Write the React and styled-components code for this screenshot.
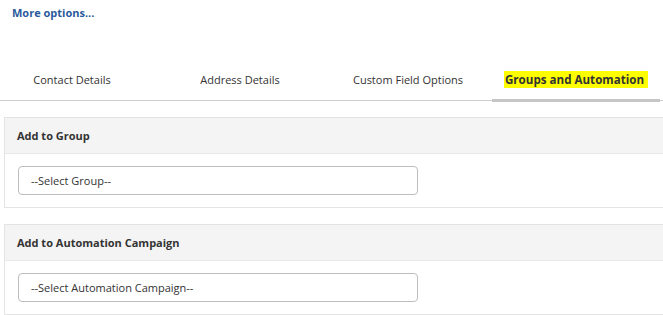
import styled, { createGlobalStyle } from 'styled-components';

const GlobalStyle = createGlobalStyle`
  body {
    margin: 0;
    background: #fff;
    font-family: 'Open Sans', 'DejaVu Sans', sans-serif;
    font-size: 11px;
    color: #333;
    overflow: hidden;
  }
`;

const Page = styled.div`
  width: 663px;
  height: 315px;
  overflow: hidden;
`;

const MoreLink = styled.a`
  display: block;
  height: 60px;
  box-sizing: border-box;
  padding: 5px 0 0 12px;
  line-height: 16px;
  font-weight: 700;
  color: #2b5a9c;
  text-decoration: none;
`;

const TabList = styled.div`
  display: flex;
  margin-left: -12px;
  width: 675px;
  border-bottom: 1px solid #cfcfcf;
`;

const Tab = styled.div`
  width: 168px;
  box-sizing: border-box;
  padding: 12px 0 ${(p) => (p.$active ? '11px' : '12px')};
  line-height: 16px;
  text-align: center;
  color: #333;
  font-size: ${(p) => (p.$active ? '11.6px' : '11px')};
  font-weight: ${(p) => (p.$active ? 700 : 400)};
  border-bottom: ${(p) => (p.$active ? '3px solid #c6c6c6' : 'none')};
  margin-bottom: ${(p) => (p.$active ? '-2px' : '0')};
`;

const Highlight = styled.span`
  background: #ffff00;
  padding: 1px 4px 1px 1px;
`;

const Panel = styled.section`
  margin: 16px 0 0 4px;
  width: 700px;
  border: 1px solid #e4e4e4;
`;

const PanelHeader = styled.div`
  height: 35px;
  display: flex;
  align-items: center;
  padding-left: 12px;
  background: #f4f4f4;
  border-bottom: 1px solid #e8e8e8;
  font-weight: 700;
  color: #333;
`;

const PanelBody = styled.div`
  padding: 12px 13px;
`;

const Select = styled.div`
  width: 400px;
  height: 29px;
  box-sizing: border-box;
  display: flex;
  align-items: center;
  padding-left: 12px;
  border: 1px solid #bdbdbd;
  border-radius: 4px;
  color: #333;
`;

const tabs = ['Contact Details', 'Address Details', 'Custom Field Options', 'Groups and Automation'];

const panels = [
  { title: 'Add to Group', placeholder: '--Select Group--' },
  { title: 'Add to Automation Campaign', placeholder: '--Select Automation Campaign--' },
];

export default function App() {
  return (
    <Page>
      <GlobalStyle />
      <MoreLink href="#">More options...</MoreLink>
      <TabList>
        {tabs.map((t, i) => {
          const active = i === tabs.length - 1;
          return (
            <Tab key={t} $active={active}>
              {active ? <Highlight>{t}</Highlight> : t}
            </Tab>
          );
        })}
      </TabList>
      {panels.map((p) => (
        <Panel key={p.title}>
          <PanelHeader>{p.title}</PanelHeader>
          <PanelBody>
            <Select>{p.placeholder}</Select>
          </PanelBody>
        </Panel>
      ))}
    </Page>
  );
}
